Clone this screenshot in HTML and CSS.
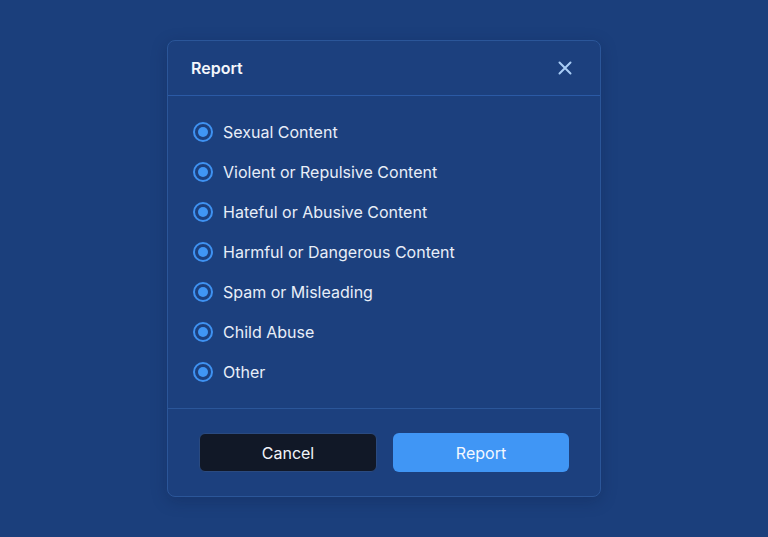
FILE: index.html
```html
<!DOCTYPE html>
<html lang="en">
<head>
    <meta charset="UTF-8">
    <meta name="viewport" content="width=device-width, initial-scale=1.0">
    <title>Report</title>
    <link rel="stylesheet" href="styles.css">
</head>
<body>
    <div class="dialog">
        <div class="dialog-header">
            <h2>Report</h2>
            <button class="close-btn" aria-label="Close">
                <svg width="14" height="14" viewBox="0 0 14 14" fill="none" stroke="currentColor" stroke-width="2" stroke-linecap="round">
                    <path d="M1.5 1.5l11 11M12.5 1.5l-11 11"/>
                </svg>
            </button>
        </div>
        <form class="dialog-body">
            <label class="option"><input type="radio" name="reason" checked><span class="radio"></span> Sexual Content</label>
            <label class="option"><input type="radio" name="reason"><span class="radio"></span> Violent or Repulsive Content</label>
            <label class="option"><input type="radio" name="reason"><span class="radio"></span> Hateful or Abusive Content</label>
            <label class="option"><input type="radio" name="reason"><span class="radio"></span> Harmful or Dangerous Content</label>
            <label class="option"><input type="radio" name="reason"><span class="radio"></span> Spam or Misleading</label>
            <label class="option"><input type="radio" name="reason"><span class="radio"></span> Child Abuse</label>
            <label class="option"><input type="radio" name="reason"><span class="radio"></span> Other</label>
        </form>
        <div class="dialog-footer">
            <button class="btn btn-cancel">Cancel</button>
            <button class="btn btn-report">Report</button>
        </div>
    </div>
</body>
</html>
```
FILE: styles.css
```css
html, body {
    margin: 0;
    height: 100%;
}
body {
    font-family: Inter, "Noto Sans", sans-serif;
    background-color: #1b3f7c;
    color: #e8eef8;
    display: flex;
    justify-content: center;
    align-items: flex-start;
}
.dialog {
    width: 432px;
    margin-top: 40px;
    background-color: #1c407e;
    border: 1px solid #2b5699;
    border-radius: 8px;
    box-shadow: 0 4px 16px rgba(10, 25, 60, 0.25);
}
.dialog-header {
    height: 54px;
    display: flex;
    align-items: center;
    justify-content: space-between;
    padding: 0 28px 0 23px;
    border-bottom: 1px solid #2b5aa5;
}
.dialog-header h2 {
    margin: 0;
    font-size: 16px;
    font-weight: 600;
    color: #f3f6fb;
}
.close-btn {
    background: none;
    border: none;
    padding: 0;
    width: 14px;
    height: 14px;
    color: #a9cdf6;
    cursor: pointer;
    display: flex;
}
.dialog-body {
    padding: 16px 24px;
    border-bottom: 1px solid #2b5699;
}
.option {
    height: 40px;
    display: flex;
    align-items: center;
    gap: 10px;
    font-size: 16px;
    color: #e8eef8;
    cursor: pointer;
}
.option input {
    display: none;
}
.radio {
    width: 16px;
    height: 16px;
    margin-left: 1px;
    border: 2px solid #3f92f2;
    border-radius: 50%;
    display: flex;
    align-items: center;
    justify-content: center;
}
.radio::after {
    content: "";
    width: 10px;
    height: 10px;
    border-radius: 50%;
    background-color: #4096f5;
}
.dialog-footer {
    display: flex;
    gap: 16px;
    padding: 24px 31px 24px 31px;
}
.btn {
    flex: 1;
    height: 39px;
    border-radius: 6px;
    font-family: inherit;
    font-size: 16px;
    font-weight: 400;
    cursor: pointer;
}
.btn-cancel {
    background-color: #111827;
    color: #f1f4f9;
    border: 1px solid #2a4a80;
}
.btn-report {
    background-color: #4096f5;
    color: #f3f8ff;
    border: none;
}
```
